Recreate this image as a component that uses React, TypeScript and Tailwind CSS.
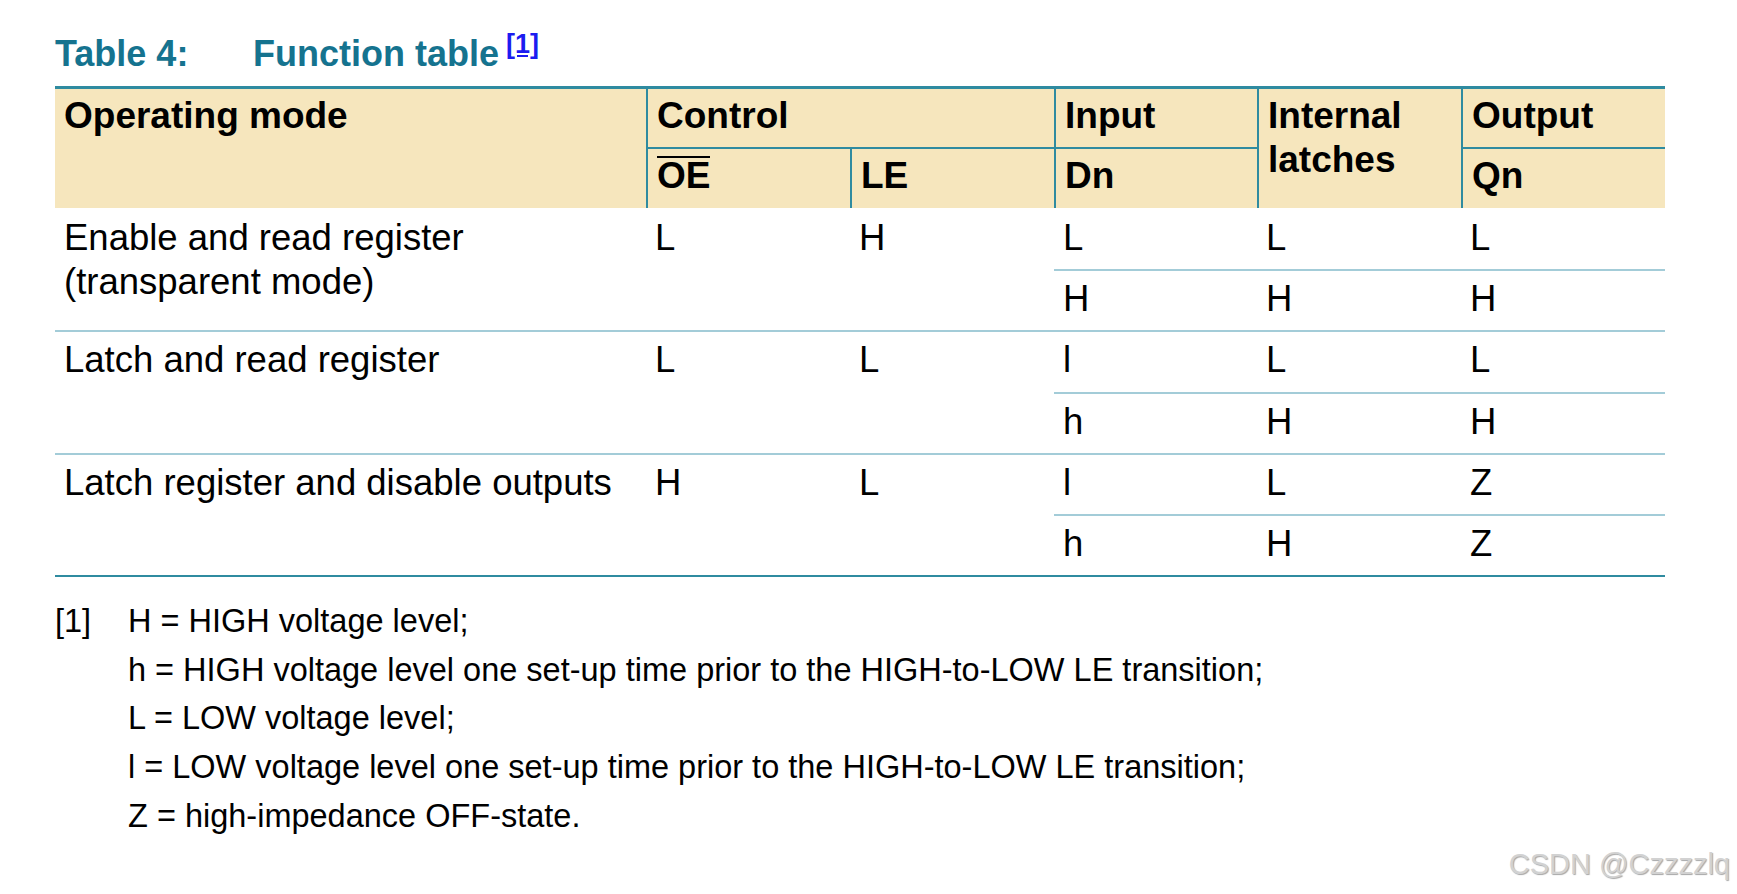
const teal = 'border-[#2f8ba0]'
const light = 'border-[#a3ccd8]'

function Head({ className = '', children }: { className?: string; children: React.ReactNode }) {
  return (
    <div className={`bg-[#f6e6bd] px-[9px] pt-[5px] text-[37px] font-bold leading-[44px] ${className}`}>
      {children}
    </div>
  )
}

function Cell({ className = '', line = false, children }: { className?: string; line?: boolean; children?: React.ReactNode }) {
  return (
    <div className={`px-[9px] text-[36.5px] leading-[44px] ${line ? `border-t-2 pt-[6px] ${light}` : 'pt-[8px]'} ${className}`}>
      {children}
    </div>
  )
}

const notes = [
  'H = HIGH voltage level;',
  'h = HIGH voltage level one set-up time prior to the HIGH-to-LOW LE transition;',
  'L = LOW voltage level;',
  'l = LOW voltage level one set-up time prior to the HIGH-to-LOW LE transition;',
  'Z = high-impedance OFF-state.',
]

export default function App() {
  return (
    <div className="relative h-[894px] w-full bg-white font-['Liberation_Sans',Arial,sans-serif] text-black">
      <div className="pl-[55px] pt-[32px]">
        <h1 className="flex items-baseline text-[36px] font-bold leading-[44px] text-[#15738f]">
          <span className="w-[198px]">Table 4:</span>
          <span>Function table</span>
          <sup className="ml-[7px] text-[27px] font-bold text-[#1c1cf0] underline">[1]</sup>
        </h1>

        <div className={`mt-[10px] grid w-[1610px] grid-cols-[591px_204px_204px_203px_204px_204px] grid-rows-[60px_59px_61px_61px_62px_61px_61px_61px] border-t-[3px] border-b-[2px] ${teal}`}>
          <Head className="col-start-1 row-span-2 row-start-1">Operating mode</Head>
          <Head className={`col-span-2 col-start-2 row-start-1 border-b-2 border-l-2 ${teal}`}>Control</Head>
          <Head className={`col-start-4 row-start-1 border-b-2 border-l-2 ${teal}`}>Input</Head>
          <Head className={`col-start-5 row-span-2 row-start-1 border-l-2 ${teal}`}>
            Internal
            <br />
            latches
          </Head>
          <Head className={`col-start-6 row-start-1 border-b-2 border-l-2 ${teal}`}>Output</Head>
          <Head className={`col-start-2 row-start-2 border-l-2 ${teal}`}>
            <span className="inline-block border-t-2 border-black leading-[36px]">OE</span>
          </Head>
          <Head className={`col-start-3 row-start-2 border-l-2 ${teal}`}>LE</Head>
          <Head className={`col-start-4 row-start-2 border-l-2 ${teal}`}>Dn</Head>
          <Head className={`col-start-6 row-start-2 border-l-2 ${teal}`}>Qn</Head>

          {/* enable and read */}
          <Cell className="col-start-1 row-span-2 row-start-3">
            Enable and read register
            <br />
            (transparent mode)
          </Cell>
          <Cell className="col-start-2 row-span-2 row-start-3">L</Cell>
          <Cell className="col-start-3 row-span-2 row-start-3">H</Cell>
          <Cell className="col-start-4 row-start-3">L</Cell>
          <Cell className="col-start-5 row-start-3">L</Cell>
          <Cell className="col-start-6 row-start-3">L</Cell>
          <Cell line className="col-start-4 row-start-4">H</Cell>
          <Cell line className="col-start-5 row-start-4">H</Cell>
          <Cell line className="col-start-6 row-start-4">H</Cell>

          {/* latch and read */}
          <Cell line className="col-start-1 row-span-2 row-start-5">Latch and read register</Cell>
          <Cell line className="col-start-2 row-span-2 row-start-5">L</Cell>
          <Cell line className="col-start-3 row-span-2 row-start-5">L</Cell>
          <Cell line className="col-start-4 row-start-5">l</Cell>
          <Cell line className="col-start-5 row-start-5">L</Cell>
          <Cell line className="col-start-6 row-start-5">L</Cell>
          <Cell line className="col-start-4 row-start-6">h</Cell>
          <Cell line className="col-start-5 row-start-6">H</Cell>
          <Cell line className="col-start-6 row-start-6">H</Cell>

          {/* latch and disable */}
          <Cell line className="col-start-1 row-span-2 row-start-7">Latch register and disable outputs</Cell>
          <Cell line className="col-start-2 row-span-2 row-start-7">H</Cell>
          <Cell line className="col-start-3 row-span-2 row-start-7">L</Cell>
          <Cell line className="col-start-4 row-start-7">l</Cell>
          <Cell line className="col-start-5 row-start-7">L</Cell>
          <Cell line className="col-start-6 row-start-7">Z</Cell>
          <Cell line className="col-start-4 row-start-8">h</Cell>
          <Cell line className="col-start-5 row-start-8">H</Cell>
          <Cell line className="col-start-6 row-start-8">Z</Cell>
        </div>

        <div className="mt-[20px] flex text-[32.5px] leading-[48.7px]">
          <span className="w-[73px]">[1]</span>
          <div className="flex flex-col">
            {notes.map((n) => (
              <span key={n}>{n}</span>
            ))}
          </div>
        </div>
      </div>

      <div className="absolute bottom-[13px] right-[7px] text-[29px] leading-[34px] text-[#d2d2d2] [text-shadow:1px_1px_1px_rgba(0,0,0,0.35)]">
        CSDN @Czzzzlq
      </div>
    </div>
  )
}
